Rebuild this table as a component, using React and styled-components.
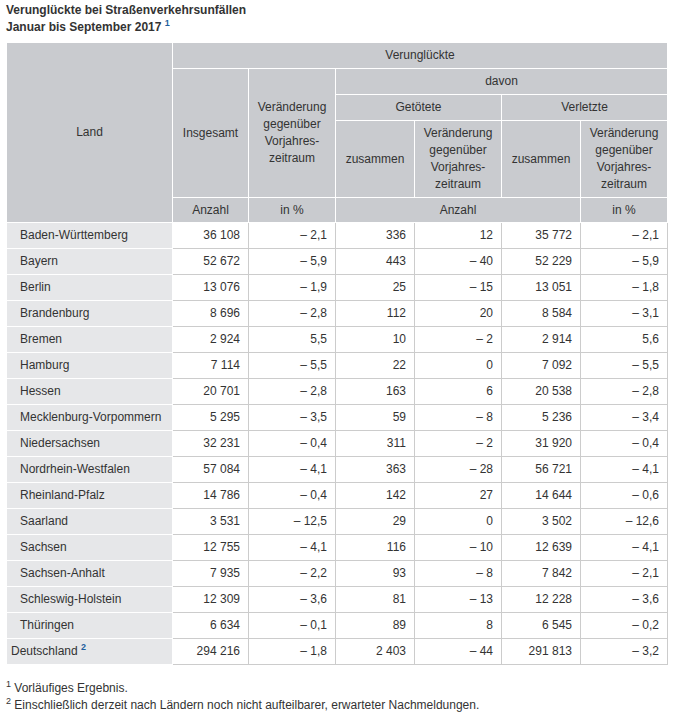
import React from 'react';
import styled, { createGlobalStyle } from 'styled-components';

const GlobalStyle = createGlobalStyle`
  body {
    margin: 0;
    background: #ffffff;
    font-family: "Liberation Sans", Arial, sans-serif;
    color: #333333;
  }
`;

const Page = styled.div`
  padding: 2px 6px 0 6px;
  font-size: 12px;
  line-height: 17px;
`;

const Title = styled.div`
  font-weight: bold;
  color: #333;
`;

const Sup = styled.sup`
  font-size: 9px;
  line-height: 0;
  vertical-align: 5px;
  color: ${props => (props.$blue ? '#1e5f9e' : '#333')};
  font-weight: ${props => (props.$blue ? 'bold' : 'normal')};
`;

const Table = styled.table`
  margin-top: 6px;
  border-collapse: collapse;
  table-layout: fixed;
  width: 661px;
  font-size: 12px;
  line-height: 17px;
`;

const Head = styled.th`
  background: #c9cbcf;
  border: 1px solid #ffffff;
  font-weight: normal;
  color: #333;
  text-align: center;
  vertical-align: middle;
  padding: 0 4px;
  height: ${props => props.$h || 25}px;
  box-sizing: border-box;
`;

const LandCell = styled.th`
  background: #e6e7e9;
  border: 1px solid #ffffff;
  font-weight: normal;
  text-align: left;
  padding: 0 0 0 ${props => (props.$total ? 4 : 13)}px;
  height: 25px;
  white-space: nowrap;
  color: #333;
`;

const Cell = styled.td`
  border: 1px solid #cccccc;
  text-align: right;
  padding: 0 8px 0 0;
  height: 25px;
  white-space: nowrap;
  color: #333;
`;

const Notes = styled.div`
  margin-top: 15px;
`;

const rows = [
  ['Baden-Württemberg', '36 108', '– 2,1', '336', '12', '35 772', '– 2,1'],
  ['Bayern', '52 672', '– 5,9', '443', '– 40', '52 229', '– 5,9'],
  ['Berlin', '13 076', '– 1,9', '25', '– 15', '13 051', '– 1,8'],
  ['Brandenburg', '8 696', '– 2,8', '112', '20', '8 584', '– 3,1'],
  ['Bremen', '2 924', '5,5', '10', '– 2', '2 914', '5,6'],
  ['Hamburg', '7 114', '– 5,5', '22', '0', '7 092', '– 5,5'],
  ['Hessen', '20 701', '– 2,8', '163', '6', '20 538', '– 2,8'],
  ['Mecklenburg-Vorpommern', '5 295', '– 3,5', '59', '– 8', '5 236', '– 3,4'],
  ['Niedersachsen', '32 231', '– 0,4', '311', '– 2', '31 920', '– 0,4'],
  ['Nordrhein-Westfalen', '57 084', '– 4,1', '363', '– 28', '56 721', '– 4,1'],
  ['Rheinland-Pfalz', '14 786', '– 0,4', '142', '27', '14 644', '– 0,6'],
  ['Saarland', '3 531', '– 12,5', '29', '0', '3 502', '– 12,6'],
  ['Sachsen', '12 755', '– 4,1', '116', '– 10', '12 639', '– 4,1'],
  ['Sachsen-Anhalt', '7 935', '– 2,2', '93', '– 8', '7 842', '– 2,1'],
  ['Schleswig-Holstein', '12 309', '– 3,6', '81', '– 13', '12 228', '– 3,6'],
  ['Thüringen', '6 634', '– 0,1', '89', '8', '6 545', '– 0,2'],
];

const total = ['294 216', '– 1,8', '2 403', '– 44', '291 813', '– 3,2'];

const nb = s => s.replace(/ /g, '\u00a0');

const Change = () => (
  <>Veränderung<br />gegenüber<br />Vorjahres-<br />zeitraum</>
);

export default function App() {
  return (
    <Page>
      <GlobalStyle />
      <Title>Verunglückte bei Straßenverkehrsunfällen</Title>
      <Title>
        Januar bis September 2017 <Sup $blue>1</Sup>
      </Title>
      <Table>
        <colgroup>
          <col style={{ width: 166 }} />
          <col style={{ width: 76 }} />
          <col style={{ width: 87 }} />
          <col style={{ width: 79 }} />
          <col style={{ width: 87 }} />
          <col style={{ width: 79 }} />
          <col style={{ width: 87 }} />
        </colgroup>
        <thead>
          <tr>
            <Head rowSpan={5}>Land</Head>
            <Head colSpan={6} $h={26}>Verunglückte</Head>
          </tr>
          <tr>
            <Head rowSpan={3}>Insgesamt</Head>
            <Head rowSpan={3}><Change /></Head>
            <Head colSpan={4} $h={26}>davon</Head>
          </tr>
          <tr>
            <Head colSpan={2} $h={26}>Getötete</Head>
            <Head colSpan={2} $h={26}>Verletzte</Head>
          </tr>
          <tr>
            <Head $h={77}>zusammen</Head>
            <Head $h={77}><Change /></Head>
            <Head $h={77}>zusammen</Head>
            <Head $h={77}><Change /></Head>
          </tr>
          <tr>
            <Head $h={25}>Anzahl</Head>
            <Head $h={25}>in %</Head>
            <Head colSpan={3} $h={25}>Anzahl</Head>
            <Head $h={25}>in %</Head>
          </tr>
        </thead>
        <tbody>
          {rows.map(([land, ...vals]) => (
            <tr key={land}>
              <LandCell>{land}</LandCell>
              {vals.map((v, i) => (
                <Cell key={i}>{nb(v)}</Cell>
              ))}
            </tr>
          ))}
          <tr>
            <LandCell $total>
              Deutschland <Sup $blue>2</Sup>
            </LandCell>
            {total.map((v, i) => (
              <Cell key={i}>{nb(v)}</Cell>
            ))}
          </tr>
        </tbody>
      </Table>
      <Notes>
        <div><Sup>1</Sup> Vorläufiges Ergebnis.</div>
        <div><Sup>2</Sup> Einschließlich derzeit nach Ländern noch nicht aufteilbarer, erwarteter Nachmeldungen.</div>
      </Notes>
    </Page>
  );
}
